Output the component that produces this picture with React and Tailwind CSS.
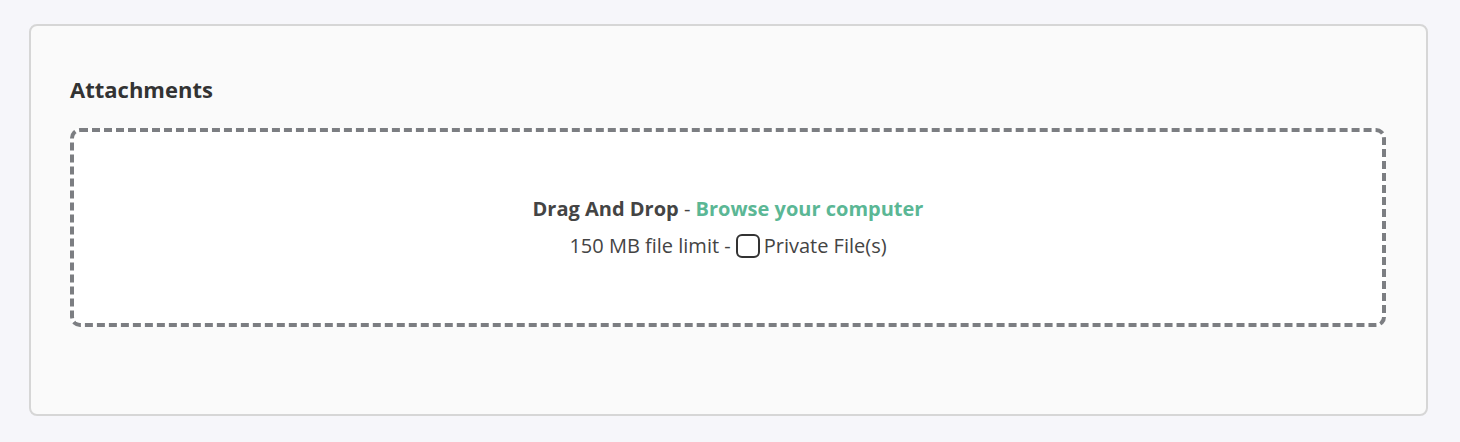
export default function App() {
  return (
    <div className="min-h-screen bg-[#f6f6fa] pl-[29px] pr-[32px] pt-[24px] pb-[26px]" style={{ fontFamily: '"Open Sans", "Liberation Sans", sans-serif' }}>
      <div className="h-[392px] rounded-[8px] border-2 border-[#d6d6d6] bg-[#fafafa] pl-[39px] pr-[40px] pt-[48px]">
        <h2 className="text-[22px] leading-[30px] font-bold text-[#333333]">Attachments</h2>
        <div className="mt-[24px] h-[199px] rounded-[10px] border-[4px] border-dashed border-[#7c7e82] bg-white flex flex-col items-center justify-center">
          <p className="text-[20px] leading-[28px] text-[#444444]">
            <span className="font-bold">Drag And Drop</span> -{" "}
            <a className="font-bold text-[#5bb795] cursor-pointer">Browse your computer</a>
          </p>
          <label className="mt-[9px] flex items-center text-[20px] leading-[28px] text-[#444444]">
            150 MB file limit -
            <span className="ml-[5px] mr-[4px] inline-block h-[24px] w-[24px] rounded-[6px] border-2 border-[#333333] bg-white" />
            Private File(s)
          </label>
        </div>
      </div>
    </div>
  );
}
